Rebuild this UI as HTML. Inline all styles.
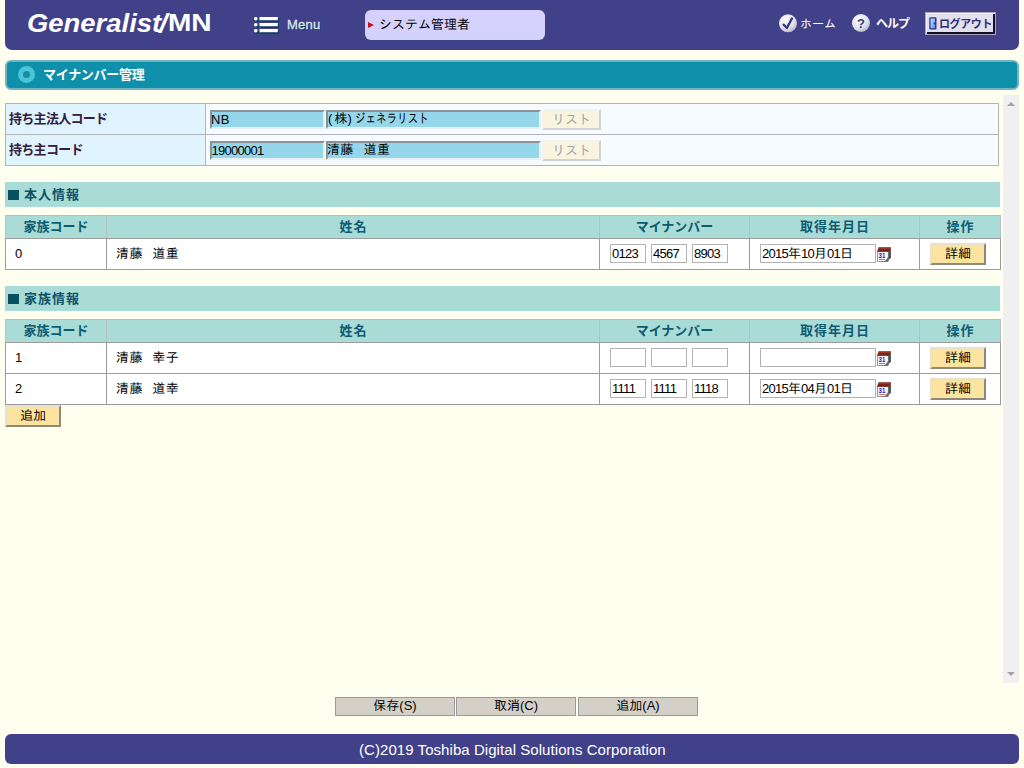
<!DOCTYPE html>
<html lang="ja">
<head>
<meta charset="utf-8">
<title>マイナンバー管理</title>
<style>
*{box-sizing:border-box;margin:0;padding:0}
html,body{width:1024px;height:768px;overflow:hidden;background:#fffff0}
body{position:relative;font-family:"Liberation Sans","IPAGothic","Noto Sans CJK JP",sans-serif;font-size:13px;color:#000}
.b{font-family:"Liberation Sans","Noto Sans CJK JP",sans-serif;font-weight:bold}
.abs{position:absolute}
/* header */
#hdr{left:5px;top:-8px;width:1014px;height:58px;background:#414189;border-radius:7px}
#logo{left:0;top:0;width:240px;height:44px;font-family:"Liberation Sans",sans-serif;font-weight:bold;color:#fff;white-space:nowrap}
#logo span{position:absolute;transform-origin:0 0;line-height:1}
#logo .g{left:27px;top:9.5px;font-style:italic;font-size:26px;transform:scaleX(1.055)}
#logo .sl{left:158px;top:11px;font-weight:normal;font-size:27px;transform:scaleX(1.6)}
#logo .mn{left:168px;top:12px;font-size:23px;transform:scaleX(1.22)}
#menutxt{left:287px;top:17px;-webkit-text-stroke:.3px #dfe6f2;font-family:"Liberation Sans",sans-serif;font-size:13px;line-height:16px;color:#dfe6f2;text-shadow:1px 1px 0 #123f62;letter-spacing:.2px}
#user{left:365px;top:10px;width:180px;height:30px;background:#d4d2fd;border-radius:6px;font-size:13px;line-height:30px;padding-left:14px;white-space:nowrap}
#user i{position:absolute;left:3px;top:12px;width:0;height:0;border-left:6px solid #c8101c;border-top:3px solid transparent;border-bottom:3px solid transparent}
.nav{color:#fff;font-size:12px;line-height:16px;white-space:nowrap}
#logout{left:925px;top:12px;width:71px;height:23px;background:#e3e0ee;border:1px solid #aaa4be;box-shadow:inset 1px 1px 0 #f4f2fa,inset -2px -2px 0 #140c28;color:#2e2e74;font-size:11px;line-height:21px;white-space:nowrap;padding-left:13px;padding-top:1px;letter-spacing:-.4px}
/* title */
#ttl{left:5px;top:60px;width:1014px;height:30px;background:#0f90aa;border:2px solid #74b4c1;border-radius:6px}
#ttl span{position:absolute;left:36px;top:4px;color:#fff;font-size:13px;line-height:18px;white-space:nowrap;letter-spacing:-.3px}
#ttl i{position:absolute;left:11px;top:4px;width:17px;height:17px;border-radius:50%;border:5px solid #4cc3d6}
/* form table */
table{border-collapse:collapse}
#frm{left:5px;top:103px;width:994px}
#frm td{border:1px solid #b4b4b4;height:31px;background:#f5fbff;vertical-align:middle}
#frm td.l{width:200px;background:#e0f4ff;color:#33203c;padding-left:3px;padding-bottom:4px;font-size:13px;letter-spacing:-.7px}
.ro{display:inline-block;vertical-align:middle;height:19px;background:#96d6ea;border:2px solid;border-color:#8f9092 #e8f0f4 #e8f0f4 #8f9092;font-size:13px;line-height:15px;padding-left:0;white-space:nowrap;overflow:hidden}
.lst{display:inline-block;vertical-align:middle;width:59px;height:21px;background:#f8f4e0;border:2px solid;border-color:#f2f2ee #cfd2d4 #cfd2d4 #f2f2ee;color:#a4a4a0;font-size:13px;line-height:17px;text-align:center}
/* sections */
.sec{left:5px;width:995px;height:25px;background:#a9dbd7;color:#0e5168;font-size:13px;line-height:24px;padding-left:19px;padding-top:1px;letter-spacing:1px}
.sec i{position:absolute;left:3px;top:8px;width:11px;height:10px;background:#06505f}
.grid{left:5px;width:995px;table-layout:fixed}
.grid th{height:23px;line-height:14px;background:#a9dbd7;color:#0e5b72;border:1px solid #b9bfbf;font-size:13px;text-align:center;vertical-align:middle;padding-bottom:0;font-family:"Liberation Sans","Noto Sans CJK JP",sans-serif;font-weight:bold}
.grid td{height:31px;line-height:16px;background:#fff;border:1px solid #9c9c9c;vertical-align:middle;padding-left:10px;padding-bottom:0;font-size:13px;white-space:nowrap}
.grid td.t{padding-left:9px;letter-spacing:.6px}
.grid th.ks{letter-spacing:1px;padding-left:1px}
.grid tr:first-child th{border-bottom-color:#9c9c9c}
.in{display:inline-block;vertical-align:middle;position:relative;top:-1px;height:19px;background:#fff;border:1px solid #b3b3b3;font-size:13px;line-height:17px;padding-left:1px;white-space:nowrap;overflow:hidden}
.d{letter-spacing:-.72px}
.p{letter-spacing:2.2px}
.k{display:inline-block;transform:scaleX(.81);transform-origin:0 50%;margin-left:1px}
.n4{width:36px;margin-right:5px}
.dt{width:116px}
.btn{display:inline-block;vertical-align:middle;background:#fce3a0;border:2px solid;border-color:#e8e2cc #8e8a7a #8e8a7a #e8e2cc;font-size:13px;line-height:17px;text-align:center;height:22px}
.cal{display:inline-block;vertical-align:middle;width:14px;height:15px;margin-left:1px;position:relative;top:0}
.sp{display:inline-block;width:9px}
/* bottom */
.fb{top:697px;width:120px;height:19px;background:#d4d0c8;border:1px solid #9a9a98;font-size:13px;line-height:15px;text-align:center}
#ftr{left:5px;top:734px;width:1014px;height:30px;background:#414189;border-radius:6px;color:#fff;font-size:15px;line-height:30px}
#ftr span{position:absolute;left:354px;top:1px;white-space:nowrap;letter-spacing:.06px}
#sb{left:1003px;top:95px;width:16px;height:588px;background:#f0f0f0}
#sb i{position:absolute;left:4px;width:0;height:0;border-left:4px solid transparent;border-right:4px solid transparent}
</style>
</head>
<body>
<div id="hdr" class="abs"></div>
<div id="logo" class="abs"><span class="g">Generalist</span><span class="sl">/</span><span class="mn">MN</span></div>
<svg class="abs" style="left:253px;top:16px" width="27" height="18" viewBox="0 0 27 18">
 <g fill="#123f62"><rect x="2" y="2" width="4" height="4" rx="1.5"/><rect x="7.5" y="2" width="18.5" height="4"/><rect x="2" y="8" width="4" height="4" rx="1.5"/><rect x="7.5" y="8" width="18.5" height="4"/><rect x="2" y="14" width="4" height="4" rx="1.5"/><rect x="7.5" y="14" width="18.5" height="4"/></g>
 <g fill="#fff"><rect x="1" y="1" width="3.6" height="3.4" rx="1.6"/><rect x="6.5" y="1" width="18.3" height="3.2"/><rect x="1" y="7" width="3.6" height="3.4" rx="1.6"/><rect x="6.5" y="7" width="18.3" height="3.2"/><rect x="1" y="13" width="3.6" height="3.4" rx="1.6"/><rect x="6.5" y="13" width="18.3" height="3.2"/></g>
</svg>
<div id="menutxt" class="abs">Menu</div>
<div id="user" class="abs"><i></i>システム管理者</div>
<svg class="abs" style="left:778px;top:13px" width="20" height="20" viewBox="0 0 20 20">
 <defs><radialGradient id="g1" cx="35%" cy="30%" r="75%"><stop offset="0" stop-color="#fbfbfd"/><stop offset=".65" stop-color="#e2e2ec"/><stop offset="1" stop-color="#b4b4ca"/></radialGradient></defs>
 <circle cx="10" cy="10.3" r="9" fill="url(#g1)"/>
 <path d="M5.6 11.6 L8.9 15 L14 5.4" fill="none" stroke="#3a3a7e" stroke-width="2.3" stroke-linecap="round" stroke-linejoin="round"/>
</svg>
<div class="abs nav" style="left:800px;top:16px">ホーム</div>
<svg class="abs" style="left:851px;top:13px" width="20" height="20" viewBox="0 0 20 20">
 <circle cx="10" cy="10" r="9" fill="url(#g1)"/>
 <text x="10" y="14.6" text-anchor="middle" font-family="Liberation Sans, sans-serif" font-weight="bold" font-size="13" fill="#3a3a82">?</text>
</svg>
<div class="abs nav b" style="left:876px;top:16px;letter-spacing:-1px">ヘルプ</div>
<div id="logout" class="abs b"><svg class="abs" style="left:3px;top:4px" width="8" height="13" viewBox="0 0 8 13"><defs><linearGradient id="g2" x1="0" y1="0" x2="1" y2="1"><stop offset="0" stop-color="#cfe2ff"/><stop offset="1" stop-color="#5d8ee6"/></linearGradient></defs><rect x=".3" y=".3" width="7.2" height="12.2" rx="1.2" fill="#26369a"/><rect x="1.6" y="1.6" width="4.4" height="9.6" fill="url(#g2)"/><rect x="4.6" y="5.6" width="1.6" height="1.8" fill="#26369a"/></svg>ログアウト</div>

<div id="ttl" class="abs"><i></i><span class="b">マイナンバー管理</span></div>

<table id="frm" class="abs">
<tr><td class="l b">持ち主法人コード</td><td style="padding-left:4px"><span class="ro" style="width:115px;text-indent:-1px;letter-spacing:.4px">NB</span><span class="ro" style="width:215px;margin-left:1px;line-height:13px"><span class="p">(</span>株<span class="p">)</span><span class="k">ジェネラリスト</span></span><span class="lst" style="margin-left:1px">リスト</span></td></tr>
<tr><td class="l b">持ち主コード</td><td style="padding-left:4px"><span class="ro d" style="width:115px;text-indent:-.6px">19000001</span><span class="ro" style="width:215px;margin-left:1px;line-height:13px;text-indent:-1px;letter-spacing:.3px">清藤<span class="sp" style="width:10px"></span>道重</span><span class="lst" style="margin-left:1px">リスト</span></td></tr>
</table>

<div class="abs sec b" style="top:182px"><i></i>本人情報</div>
<table class="abs grid" style="top:215px">
<colgroup><col style="width:101px"><col style="width:493px"><col style="width:150px"><col style="width:170px"><col style="width:81px"></colgroup>
<tr><th>家族コード</th><th class="ks">姓名</th><th>マイナンバー</th><th class="ks">取得年月日</th><th class="ks">操作</th></tr>
<tr><td class="t">0</td><td class="t">清藤<span class="sp"></span>道重</td><td><span class="in n4 d">0123</span><span class="in n4 d">4567</span><span class="in n4 d">8903</span></td><td><span class="in dt"><span class="d">2015</span>年<span class="d">10</span>月<span class="d">01</span>日</span><svg class="cal" viewBox="0 0 14 15"><use href="#calico"/></svg></td><td><span class="btn" style="width:56px">詳細</span></td></tr>
</table>

<div class="abs sec b" style="top:286px"><i></i>家族情報</div>
<table class="abs grid" style="top:319px">
<colgroup><col style="width:101px"><col style="width:493px"><col style="width:150px"><col style="width:170px"><col style="width:81px"></colgroup>
<tr><th>家族コード</th><th class="ks">姓名</th><th>マイナンバー</th><th class="ks">取得年月日</th><th class="ks">操作</th></tr>
<tr><td class="t">1</td><td class="t">清藤<span class="sp"></span>幸子</td><td><span class="in n4"></span><span class="in n4"></span><span class="in n4"></span></td><td><span class="in dt"></span><svg class="cal" viewBox="0 0 14 15"><use href="#calico"/></svg></td><td><span class="btn" style="width:56px">詳細</span></td></tr>
<tr><td class="t">2</td><td class="t">清藤<span class="sp"></span>道幸</td><td><span class="in n4 d">1111</span><span class="in n4 d">1111</span><span class="in n4 d">1118</span></td><td><span class="in dt"><span class="d">2015</span>年<span class="d">04</span>月<span class="d">01</span>日</span><svg class="cal" viewBox="0 0 14 15"><use href="#calico"/></svg></td><td><span class="btn" style="width:56px">詳細</span></td></tr>
</table>
<div class="abs btn" style="left:5px;top:405px;width:56px">追加</div>

<svg width="0" height="0" style="position:absolute"><defs>
<g id="calico">
 <path d="M11 4.6 L13.9 2.4 L13.9 11 L9.6 14.8 L4 14.8 L11 12 Z" fill="#4e4e4e"/>
 <rect x=".4" y="4.4" width="10.8" height="10" fill="#fff" stroke="#6e6e6e" stroke-width=".7"/>
 <path d="M11.2 10 L11.2 14.4 L7.5 14.4 Z" fill="#6a6a6a"/>
 <path d="M0 4.8 L1.6 .3 L13.9 .3 L13.9 2.4 L11.4 4.8 Z" fill="#7c2216"/>
 <path d="M2.2 1.6 H13" stroke="#b4604a" stroke-width=".9" stroke-dasharray="1.1 1"/>
 <text x="1.5" y="11.1" textLength="6.8" lengthAdjust="spacingAndGlyphs" font-family="Liberation Sans, sans-serif" font-weight="bold" font-size="7.4" fill="#1414c4">31</text>
 <rect x="2" y="12.1" width="6" height=".8" fill="#d2482a"/>
</g></defs></svg>

<div class="abs fb" style="left:335px">保存(S)</div>
<div class="abs fb" style="left:456px">取消(C)</div>
<div class="abs fb" style="left:578px">追加(A)</div>
<div id="ftr" class="abs"><span>(C)2019 Toshiba Digital Solutions Corporation</span></div>
<div id="sb" class="abs"><i style="top:7px;border-bottom:4px solid #a3a3a3"></i><i style="top:577px;border-top:4px solid #a3a3a3"></i></div>
</body>
</html>
